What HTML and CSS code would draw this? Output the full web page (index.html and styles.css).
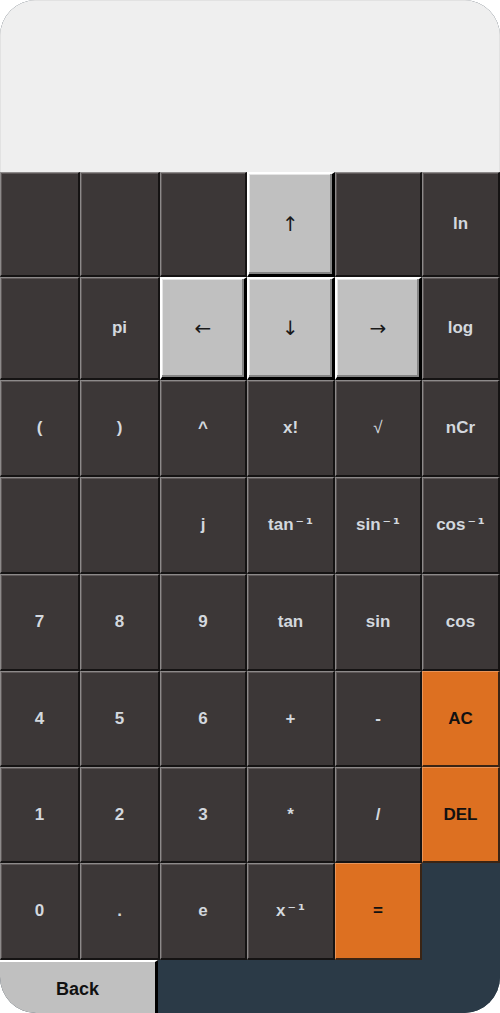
FILE: index.html
```html
<!DOCTYPE html>
<html>
<head>
<meta charset="utf-8">
<link rel="stylesheet" href="styles.css">
</head>
<body>
<div class="frame">
  <div class="display"></div>
  <div class="keys">
    <div class="key"></div><div class="key"></div><div class="key"></div><div class="key arrow">↑</div><div class="key"></div><div class="key">ln</div>
    <div class="key"></div><div class="key">pi</div><div class="key arrow">←</div><div class="key arrow">↓</div><div class="key arrow">→</div><div class="key">log</div>
    <div class="key">(</div><div class="key">)</div><div class="key">^</div><div class="key">x!</div><div class="key thin">√</div><div class="key">nCr</div>
    <div class="key"></div><div class="key"></div><div class="key">j</div><div class="key">tan<span class="sup">⁻¹</span></div><div class="key">sin<span class="sup">⁻¹</span></div><div class="key">cos<span class="sup">⁻¹</span></div>
    <div class="key">7</div><div class="key">8</div><div class="key">9</div><div class="key">tan</div><div class="key">sin</div><div class="key">cos</div>
    <div class="key">4</div><div class="key">5</div><div class="key">6</div><div class="key">+</div><div class="key">-</div><div class="key orange">AC</div>
    <div class="key">1</div><div class="key">2</div><div class="key">3</div><div class="key">*</div><div class="key">/</div><div class="key orange">DEL</div>
    <div class="key">0</div><div class="key">.</div><div class="key">e</div><div class="key">x<span class="sup">⁻¹</span></div><div class="key orange">=</div><div class="fill"></div>
  </div>
  <div class="bottom">
    <div class="back">Back</div>
    <div class="fill"></div>
  </div>
</div>
</body>
</html>
```
FILE: styles.css
```css
html, body {
  margin: 0;
  padding: 0;
  background: #ffffff;
}
.frame {
  width: 500px;
  height: 1013px;
  border-radius: 36px;
  overflow: hidden;
  display: flex;
  flex-direction: column;
  font-family: "Liberation Sans", Arial, sans-serif;
  background: #2b3a47;
}
.display {
  height: 172px;
  background: #efefef;
  box-shadow: inset 1px 1px 0 #e2e2e2, inset -1px 0 0 #e2e2e2;
}
.keys {
  display: grid;
  grid-template-columns: 80px 80px 87px 88px 87px 78px;
  grid-template-rows: 105px 103px 97px 97px 97px 96px 96px 97px;
}
.key {
  box-sizing: border-box;
  background: #3c3737;
  border-style: solid;
  border-width: 1px 2px 2px 1px;
  border-color: #8d8a8a #151313 #151313 #8d8a8a;
  box-shadow: inset 1px 1px 0 #5e5858;
  color: #d3d8de;
  font-weight: bold;
  font-size: 17px;
  display: flex;
  align-items: center;
  justify-content: center;
}
.key.thin {
  font-weight: normal;
}
.sup {
  font-family: "DejaVu Sans", sans-serif;
  font-size: 16px;
  letter-spacing: 2px;
  margin-left: 2px;
  margin-right: -2px;
  position: relative;
  top: -2px;
}
.key.arrow {
  background: #c0c0c0;
  color: #1a1a1a;
  font-family: "DejaVu Sans", sans-serif;
  font-weight: normal;
  font-size: 20px;
  border-width: 2px 3px 3px 2px;
  border-color: #ffffff #000000 #000000 #ffffff;
  box-shadow: inset -2px -2px 0 #858585, inset 1px 1px 0 #e4e4e4;
}
.key.orange {
  background: #dd7021;
  color: #111111;
  border-color: #e8955a #3a2414 #3a2414 #e8955a;
  box-shadow: none;
}
.fill {
  background: #2b3a47;
}
.bottom {
  flex: 1;
  display: flex;
}
.back {
  box-sizing: border-box;
  width: 158px;
  background: #c0c0c0;
  border-top: 2px solid #ffffff;
  border-right: 3px solid #000000;
  color: #111111;
  font-weight: bold;
  font-size: 18px;
  padding-top: 4px;
  display: flex;
  align-items: center;
  justify-content: center;
}
.bottom .fill {
  flex: 1;
}
```
